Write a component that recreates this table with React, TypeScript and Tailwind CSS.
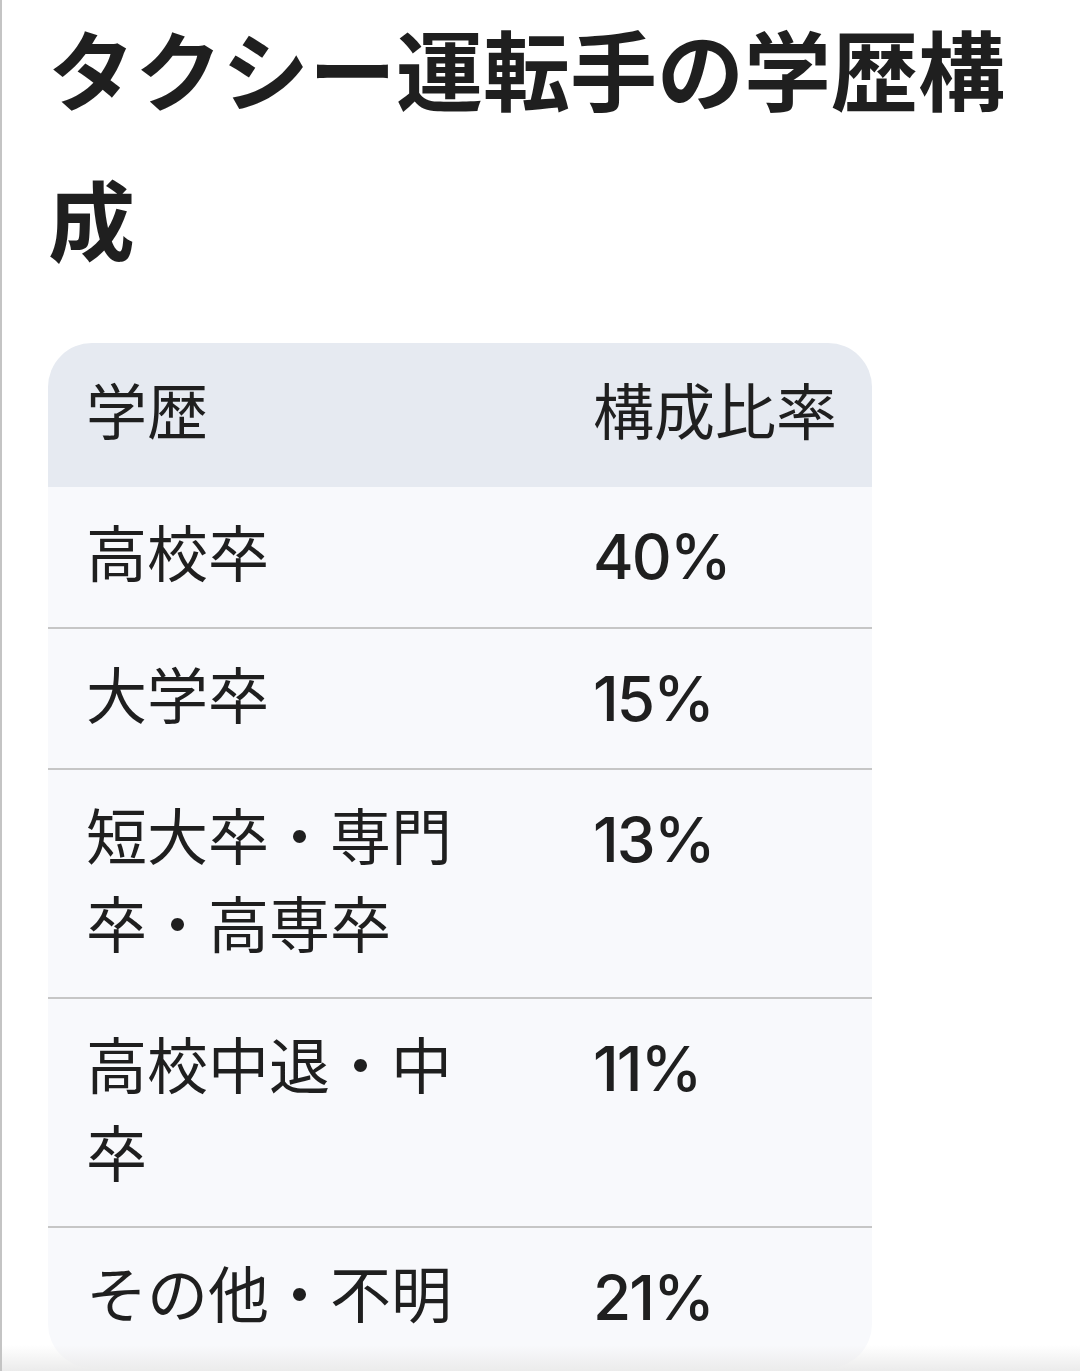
const rows: { label: string; value: string }[] = [
  { label: '高校卒', value: '40%' },
  { label: '大学卒', value: '15%' },
  { label: '短大卒・専門卒・高専卒', value: '13%' },
  { label: '高校中退・中卒', value: '11%' },
  { label: 'その他・不明', value: '21%' },
];

export default function App() {
  return (
    <div
      className="relative h-[1371px] overflow-hidden bg-white border-l-2 border-[#c4c4c4] pl-[46px] text-[#1f1f1f]"
      style={{ fontFamily: 'Roboto, "Noto Sans CJK JP", sans-serif' }}
    >
      <h1 className="pr-[30px] text-[87px] font-bold leading-[150px] tracking-normal">
        タクシー運転手の学歴構成
      </h1>

      <div className="mt-[43px] w-[824px] overflow-hidden rounded-[44px]">
        <div className="flex bg-[#e6eaf1] pt-[28px] pb-[29px] text-[61px] leading-[87px]">
          <div className="w-[545px] pl-[38px]">学歴</div>
          <div className="flex-1">構成比率</div>
        </div>
        {rows.map((row, i) => (
          <div
            key={row.label}
            className={
              'flex bg-[#f8f9fc] py-[26px] text-[61px] leading-[87.5px] ' +
              (i < rows.length - 1 ? 'border-b-2 border-[#c6c6c6]' : '')
            }
          >
            <div className="w-[545px] pl-[38px]">
              <div className="w-[400px]">{row.label}</div>
            </div>
            <div className="flex-1 font-['Inter',sans-serif] text-[62px] font-medium tracking-[-0.03em]">
              {row.value}
            </div>
          </div>
        ))}
      </div>

      <div className="pointer-events-none absolute inset-x-0 bottom-0 h-[26px] bg-gradient-to-b from-transparent to-[#ebebeb]" />
    </div>
  );
}
